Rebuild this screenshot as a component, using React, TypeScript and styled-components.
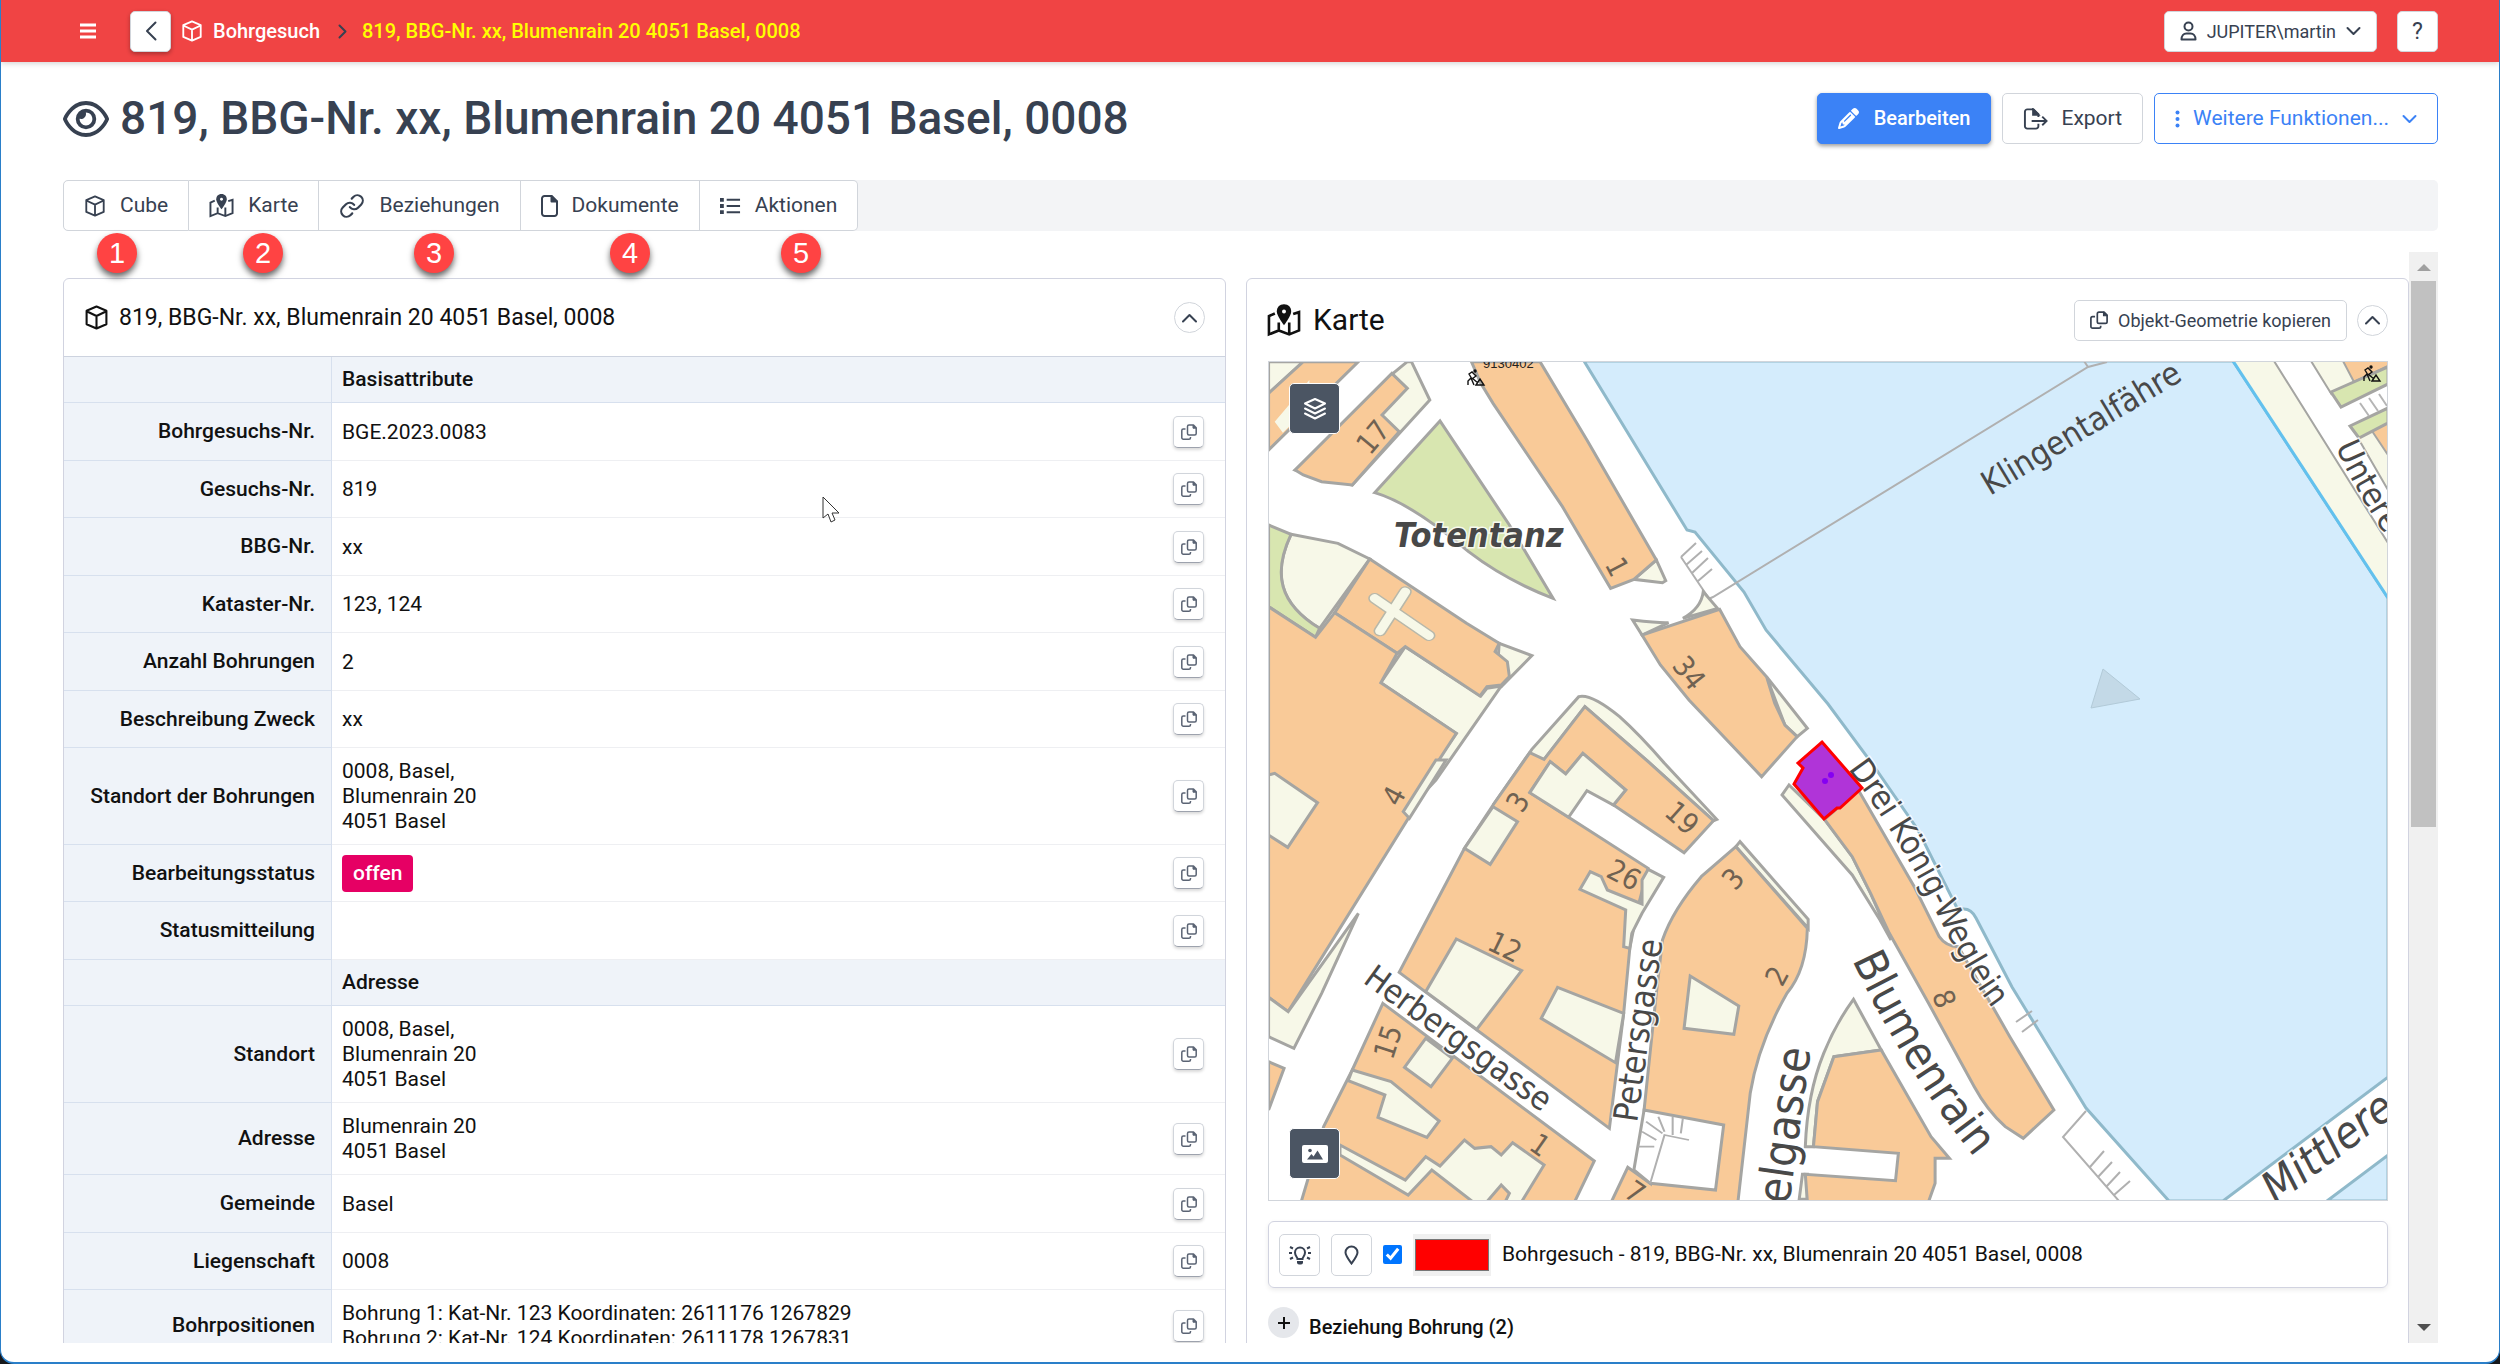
import React from "react";
import styled, { createGlobalStyle, css } from "styled-components";
import { Link } from "lucide-react";
import { FaPencil, FaRegEye } from "react-icons/fa6";

const color = {
  header: "#f04444",
  ink: "#374151",
  line: "#d1d5db",
  panelLine: "#d1d3e0",
  label: "#eff3f9",
  labelLine: "#d7e0ee",
  rowLine: "#eeeff2",
  primary: "#3b82f6",
};

const GlobalStyle = createGlobalStyle`
  * { box-sizing: border-box; }
  html { background: #16181c; }
  body { margin: 0; font-family: Roboto, "Liberation Sans", sans-serif; font-size: 21px; line-height: 25px; color: #111; }
  button, input { font: inherit; color: inherit; }
  h1, h2, p { margin: 0; font-weight: 400; }
`;

const Window = styled.div`
  position: relative;
  display: flex;
  flex-direction: column;
  height: 100vh;
  background: #fff;
  border: solid #2a7fc9;
  border-width: 0 1px 2px;
  border-radius: 0 0 14px 14px;
  overflow: hidden;
`;

const Header = styled.header`
  display: flex;
  flex: none;
  align-items: center;
  height: 62px;
  padding: 0 61px 0 76px;
  background: ${color.header};
  box-shadow: 0 1px 6px rgba(0, 0, 0, 0.2);
`;

const Button = styled.button<{ $small?: boolean; $tone?: "primary" | "outline" }>`
  display: inline-flex;
  flex: none;
  align-items: center;
  justify-content: center;
  gap: ${(p) => (p.$small ? 10 : 13)}px;
  height: ${(p) => (p.$small ? 41 : 51)}px;
  padding: 0 ${(p) => (p.$small ? 15 : 20)}px;
  background: #fff;
  border: 1px solid ${color.line};
  border-radius: 5px;
  color: ${color.ink};
  font-size: ${(p) => (p.$small ? 18 : 21)}px;
  ${(p) => p.$tone === "primary" && css`
    gap: 15px;
    background: ${color.primary};
    border-color: ${color.primary};
    color: #fff;
    font-size: 20px;
    font-weight: 500;
    box-shadow: 0 2px 4px rgba(0, 0, 0, 0.4);
  `}
  ${(p) => p.$tone === "outline" && css`
    border-color: ${color.primary};
    color: ${color.primary};
  `}
`;

const MenuButton = styled.button`
  display: flex;
  width: 22px;
  height: 30px;
  padding: 0;
  align-items: center;
  justify-content: center;
  background: none;
  border: 0;
  color: #fff;
`;

const BackButton = styled(Button)`
  width: 41px;
  margin: 0 10px 0 31px;
  padding: 0;
  box-shadow: 0 2px 4px rgba(0, 0, 0, 0.3);
`;

const SquareButton = styled(Button)`
  width: 41px;
  margin-left: 20px;
  padding: 0;
  font-size: 23px;
`;

const Breadcrumb = styled.nav`
  display: flex;
  flex: 1;
  align-items: center;
  font-size: 20px;
  font-weight: 500;
  color: ${color.ink};
  a { margin: 0 18px 0 10px; color: #fff; text-decoration: none; }
`;

const Crumb = styled.span`
  margin-left: 15px;
  color: #ffff00;
`;

const TitleBar = styled.div`
  display: flex;
  align-items: center;
  gap: 11px;
  margin: 31px 61px 0 62px;
  height: 51px;
`;

const Title = styled.h1`
  display: flex;
  flex: 1;
  align-items: center;
  gap: 11px;
  color: ${color.ink};
  font-size: 46px;
  font-weight: 500;
  line-height: 51px;
`;

const TabBar = styled.nav`
  display: flex;
  flex: none;
  height: 51px;
  margin: 36px 61px 0 62px;
  background: #f3f4f6;
  border-radius: 5px;
`;

const Tab = styled.button`
  display: flex;
  align-items: center;
  gap: 14px;
  height: 51px;
  padding: 0 20px;
  background: #fff;
  border: 1px solid ${color.line};
  border-left-width: 0;
  color: ${color.ink};
  &:first-child { border-left-width: 1px; border-radius: 5px 0 0 5px; }
  &:last-child { border-radius: 0 5px 5px 0; }
`;

const Marker = styled.span<{ $left: number }>`
  position: absolute;
  top: 233px;
  left: ${(p) => p.$left}px;
  width: 40px;
  height: 40px;
  border-radius: 50%;
  background: #ff4343;
  box-shadow: 0 4px 6px rgba(0, 0, 0, 0.6);
  color: #fff;
  font-family: "Liberation Sans", Arial, sans-serif;
  font-size: 29px;
  line-height: 40px;
  text-align: center;
`;

const Body = styled.main`
  display: flex;
  flex: 1;
  min-height: 0;
  margin: 21px 61px 19px 62px;
`;

const Columns = styled.div`
  display: grid;
  flex: 1;
  grid-template-columns: minmax(0, 1fr) minmax(0, 1fr);
  gap: 20px;
  padding-top: 26px;
  overflow: hidden;
`;

const Panel = styled.section`
  min-height: 1200px;
  border: 1px solid ${color.panelLine};
  border-radius: 6px 6px 0 0;
`;

const PanelHead = styled.div<{ $large?: boolean }>`
  display: flex;
  align-items: center;
  gap: 10px;
  height: ${(p) => (p.$large ? 82 : 77)}px;
  padding: 0 20px;
`;

const PanelTitle = styled.h2<{ $large?: boolean }>`
  display: flex;
  flex: 1;
  align-items: center;
  gap: ${(p) => (p.$large ? 12 : 10)}px;
  font-size: ${(p) => (p.$large ? 30 : 23)}px;
  line-height: 36px;
`;

const RoundButton = styled.button`
  display: flex;
  flex: none;
  align-items: center;
  justify-content: center;
  width: 31px;
  height: 31px;
  padding: 0;
  border: 1px solid ${color.line};
  border-radius: 50%;
  background: #fff;
  color: ${color.ink};
`;

const Table = styled.table`
  width: 100%;
  border-collapse: separate;
  border-spacing: 0;
  border-top: 1px solid #cdd3df;
`;

const Label = styled.th`
  width: 268px;
  padding: 0 16px 0 8px;
  background: ${color.label};
  border: solid ${color.labelLine};
  border-width: 0 1px 1px 0;
  font-weight: 500;
  text-align: right;
`;

const GroupTitle = styled.th`
  padding: 0 10px;
  background: ${color.label};
  border-bottom: 1px solid ${color.labelLine};
  font-weight: 500;
  text-align: left;
`;

const Value = styled.td`
  padding: 11px 10px 10px;
  border-bottom: 1px solid ${color.rowLine};
  white-space: pre-line;
`;

const Action = styled.td`
  width: 52px;
  padding: 0;
  border-bottom: 1px solid ${color.rowLine};
`;

const Row = styled.tr`
  height: 58px;
  &:nth-child(odd) { height: 57px; }
`;

const GroupRow = styled.tr`
  height: 46px;
`;

const CopyButton = styled.button`
  display: flex;
  align-items: center;
  justify-content: center;
  width: 31px;
  height: 32px;
  padding: 0;
  border: 1px solid ${color.line};
  border-bottom-color: #9da2ad;
  border-radius: 5px;
  background: #fff;
  box-shadow: 0 2px 3px rgba(0, 0, 0, 0.15);
  color: #5b6474;
`;

const Status = styled.span`
  display: inline-block;
  margin: -7px 0;
  padding: 6px 11px;
  border-radius: 4px;
  background: #e60064;
  color: #fff;
  font-weight: 500;
`;

const MapBox = styled.div`
  position: relative;
  margin: 0 20px 0 21px;
  border: 1px solid ${color.line};
  svg { display: block; }
`;

const MapButton = styled.button<{ $bottom?: boolean }>`
  position: absolute;
  left: 20px;
  ${(p) => (p.$bottom ? "bottom: 21px;" : "top: 21px;")}
  display: flex;
  align-items: center;
  justify-content: center;
  width: 51px;
  height: 51px;
  padding: 0;
  border: 1px solid #fff;
  border-radius: 5px;
  background: #4b5563;
  color: #fff;
`;

const Legend = styled.div`
  display: flex;
  align-items: center;
  gap: 11px;
  height: 67px;
  margin: 20px 20px 0 21px;
  padding: 0 10px;
  border: 1px solid ${color.panelLine};
  border-radius: 6px;
  box-shadow: 0 2px 5px rgba(0, 0, 0, 0.08);
`;

const LegendButton = styled(Button)`
  width: 41px;
  height: 42px;
  padding: 0;
`;

const Check = styled.input`
  width: 19px;
  height: 19px;
  margin: 0;
  accent-color: #0075ff;
`;

const Swatch = styled.input`
  width: 78px;
  height: 42px;
  padding: 5px 2px;
  border: 0;
  background: #f0f0f0;
  &::-webkit-color-swatch-wrapper { padding: 0; }
  &::-webkit-color-swatch { border: 1px solid #767676; border-radius: 0; }
`;

const Relation = styled.div`
  display: flex;
  align-items: flex-start;
  gap: 10px;
  margin: 19px 21px 0;
`;

const RelationTitle = styled.p`
  padding-top: 8px;
  font-size: 20px;
  font-weight: 500;
`;

const Expand = styled(RoundButton)`
  border: 0;
  background: #e5e7eb;
  color: #111;
`;

const Scrollbar = styled.div`
  display: flex;
  flex: none;
  flex-direction: column;
  align-items: center;
  justify-content: space-between;
  width: 29px;
  background: #f0f0f0;
`;

const ScrollTrack = styled.div`
  flex: 1;
  width: 25px;
`;

const ScrollThumb = styled.div`
  height: 53%;
  background: #c1c1c1;
`;

const Arrow = styled.div<{ $down?: boolean }>`
  margin: ${(p) => (p.$down ? "12px 0" : "12px 0 10px")};
  border: solid transparent;
  border-width: ${(p) => (p.$down ? "7px 7px 0" : "0 7px 7px")};
  border-top-color: ${(p) => (p.$down ? "#505050" : "transparent")};
  border-bottom-color: ${(p) => (p.$down ? "transparent" : "#a0a0a0")};
`;

const Cursor = styled.svg`
  position: absolute;
  top: 496px;
  left: 820px;
`;

const Bars = () => (
  <svg width="18" height="16" viewBox="0 0 18 16" stroke="currentColor" strokeWidth="3">
    <path d="M1 2h16M1 8h16M1 14h16" />
  </svg>
);

const chevrons = {
  down: [15, 10, "M1.500 2 7.500 8 13.500 2"],
  up: [15, 10, "M1 8.500 7.500 2 14 8.500"],
  left: [12, 20, "M10.500 1.500 2 10 10.500 18.500"],
  right: [9, 15, "M1.500 1.500 7.500 7.500 1.500 13.500"],
} as const;

const Chevron = ({ to }: { to: keyof typeof chevrons }) => {
  const [w, h, d] = chevrons[to];
  return (
    <svg width={w} height={h} viewBox={`0 0 ${w} ${h}`} fill="none" stroke="currentColor" strokeWidth="2" strokeLinecap="round" strokeLinejoin="round">
      <path d={d} />
    </svg>
  );
};

const CubeIcon = ({ size = 22, tint = "currentColor" }: { size?: number; tint?: string }) => (
  <svg width={size} height={size} viewBox="0 0 24 24" fill="none" stroke={tint} strokeWidth="2" strokeLinejoin="round">
    <path d="M12 1.500 21.500 5.500V18.500L12 22.500 2.500 18.500V5.500ZM2.500 6 12 10.500 21.500 6M12 10.500V22" />
  </svg>
);

const FileIcon = () => (
  <svg width="17" height="22" viewBox="0 0 17 22" fill="none" stroke="currentColor" strokeWidth="2" strokeLinejoin="round">
    <path d="M3.500 1H10.500L16 6.500V18.500A2.500 2.500 0 0 1 13.500 21H3.500A2.500 2.500 0 0 1 1 18.500V3.500A2.500 2.500 0 0 1 3.500 1Z" />
    <path d="M10.500 1V6.500H16Z" fill="currentColor" />
  </svg>
);

const CopyIcon = ({ size = 16 }: { size?: number }) => (
  <svg width={size} height={size} viewBox="0 0 16 16" fill="none" stroke="currentColor" strokeWidth="1.500" strokeLinejoin="round">
    <path d="M8 1H12.500L15.200 3.700V9.500A1.500 1.500 0 0 1 13.700 11H8A1.500 1.500 0 0 1 6.500 9.500V2.500A1.500 1.500 0 0 1 8 1Z" />
    <path d="M12 1V4.200H15.200Z" fill="currentColor" strokeWidth="1" />
    <path d="M4.500 5H2.300A1.500 1.500 0 0 0 .8 6.500V13.700A1.500 1.500 0 0 0 2.300 15.200H8A1.500 1.500 0 0 0 9.500 13.700V13" />
  </svg>
);

const DotsIcon = () => (
  <svg width="5" height="18" viewBox="0 0 5 18" fill="currentColor">
    <circle cx="2.500" cy="2.500" r="2" /><circle cx="2.500" cy="9" r="2" /><circle cx="2.500" cy="15.500" r="2" />
  </svg>
);

const ImageIcon = () => (
  <svg width="26" height="18" viewBox="0 0 26 18">
    <rect width="26" height="18" rx="2" fill="#fff" />
    <circle cx="8" cy="5.500" r="1.800" fill="#4b5563" />
    <path d="M5 14.500 9.500 9 11.500 11.500 15.500 5.500 21 14.500Z" fill="#4b5563" />
  </svg>
);

const MapPinIcon = ({ size }: { size: number }) => (
  <svg width={size} height={size} viewBox="0 0 26 26" fill="none" stroke="currentColor" strokeWidth="2">
    <path d="M6 8 1.500 10v14L9 21l8 3 7.500-3V7L20 8.500M9 15v6M17 15v9" />
    <path d="M13 1c-3.500 0-5.500 2.400-5.500 5.500C7.500 10 13 17 13 17s5.500-7 5.500-10.500C18.500 3.400 16.500 1 13 1Z" fill="currentColor" stroke="none" />
    <circle cx="13" cy="6.500" r="1.500" fill="#fff" stroke="none" />
  </svg>
);

const ListIcon = () => (
  <svg width="21" height="18" viewBox="0 0 22 18" stroke="currentColor" strokeWidth="2">
    <path d="M7 2.500h14M7 9h14M7 15.500h14" />
    <path d="M0 2.500h4M0 9h4M0 15.500h4" strokeWidth="4" />
  </svg>
);

const ExportIcon = () => (
  <svg width="25" height="22" viewBox="0 0 26 22" fill="none" stroke="currentColor" strokeWidth="2">
    <path d="M16 16v2.500a2.500 2.500 0 0 1-2.500 2.500h-9A2.500 2.500 0 0 1 2 18.500v-15A2.500 2.500 0 0 1 4.500 1H11l5 5v3M9 13h15M20 8.500l4.500 4.500-4.500 4.500" />
    <path d="M10.500 1v5.500H16Z" fill="currentColor" />
  </svg>
);

const UserIcon = () => (
  <svg width="17" height="20" viewBox="0 0 17 20" fill="none" stroke="currentColor" strokeWidth="2">
    <circle cx="8.500" cy="5.500" r="4" />
    <path d="M1.500 18.500c0-3.500 2-6 5-6h4c3 0 5 2.500 5 6Z" strokeLinejoin="round" />
  </svg>
);

const LayersIcon = () => (
  <svg width="24" height="24" viewBox="0 0 24 24" fill="none" stroke="currentColor" strokeWidth="2" strokeLinejoin="round" strokeLinecap="round">
    <path d="m12 2 10 4.500-10 5-10-5ZM2 11.500l10 5 10-5M2 16.500l10 5 10-5" />
  </svg>
);

const BulbIcon = () => (
  <svg width="24" height="20" viewBox="0 0 24 20" fill="none" stroke="currentColor" strokeWidth="2">
    <path d="M9.500 14c0-2-2.500-3-2.500-6.500a5 5 0 0 1 10 0c0 3.500-2.500 4.500-2.500 6.500ZM1 8h3M20 8h3M2 2l3 1.500M22 2l-3 1.500M2 14l3-1.500M22 14l-3-1.500" />
    <path d="M9 16h6v1.500a2 2 0 0 1-2 2h-2a2 2 0 0 1-2-2Z" fill="currentColor" stroke="none" />
  </svg>
);

const PinIcon = () => (
  <svg width="15" height="20" viewBox="0 0 15 20" fill="none" stroke="currentColor" strokeWidth="2">
    <path d="M7.500 18.500C5 15 1.500 10.500 1.500 7.500a6 6 0 0 1 12 0c0 3-3.500 7.500-6 11Z" />
  </svg>
);

const upper = {
  cream: [
    "M70 65H155L70 160Z",
    "M135 390 375 100 410 65H420L465 180 275 435Z",
    "M965 718 1020 660 1043 722 1035 728Z",
    "M125 583 240 610 318 657 195 865C95 790 80 700 125 583Z",
    "M405 920 588 1068 640 1040 715 947 635 910 630 1000Z",
    "M405 920 590 1068 605 1045 640 1038 480 1320 400 1425 450 1320 530 1180 345 1028Z",
    "M962 840Q1030 850 1050 848L985 885Z",
    "M1135 755 1170 805 1085 835Q1130 805 1135 755Z",
    "M1290 1010 1390 1165 1365 1190 1335 1155Z",
  ],
  green: [
    "M330 458 490 243 660 555 767 775Q650 720 560 635 420 490 330 458Z",
    "M70 555 125 583C80 700 95 790 195 865L185 892 70 800Z",
  ],
  orange: [
    "M155 65H290L70 330V160Z",
    "M135 390 372 100 410 145 348 225 390 275 275 435 200 425 155 405Z",
    "M567 65H735L850 300 1020 660 965 718 908 745 790 500 620 190 590 130Z",
    "M318 657 555 850 635 910 625 935 655 965 660 1010 640 1035 605 1040 588 1068 405 920 385 940 232 818Z",
    "M70 800 185 892 232 818 385 940 345 1028 530 1180 405 1415 415 1430 118 2015 70 1972Z",
    "M1175 808 1225 920 1290 1010 1310 1090 1335 1155 1365 1190 1278 1310 1100 1080 1030 975 985 885Z",
  ],
};

const lower = {
  cream: [
    "M505 0 415 175 400 155 480 0Z",
    "M290 460 200 700 132 865 70 830V712L118 755Z",
    "M620 135 715-32 830-190Q860-200 930-130 980-75 1040 10L1168 178 1160 182 1000 5 845-160 745-2Z",
    "M1215 260 1225 245 1392 478V505Z",
    "M1503 718 1571 870 1455 890 1415 1025 1405 1160H1385Q1390 1000 1430 880 1460 790 1503 718Z",
    "M1345 75 1328 105 1500 345 1568 480 1595 540 1545 400 1500 290 1432 178Z",
    "M1370 1318 1378 1243H1390V1318Z",
  ],
  orange: [
    "M845-160 745-2 710-22 620 135 550 265 390 637 905 1105 940 760 955 565 975 440 1000 325 805 172 710 98 760 5 798 42 840-20 945 90 915 135 1088 278 1160 182 1000 5Z",
    "M350 730 868 1203 820 1325H150L205 1100 275 930Z",
    "M70 905 108 925 70 1050Z",
    "M1215 260 1390 505Q1388 630 1340 700 1270 850 1250 1000L1220 1325H910L950 1222 1005 1270 990 1050 1020 700 1035 540Q1060 450 1130 350Z",
    "M1455 890 1571 870 1693 1130 1738 1195H1703V1270L1687 1325H1390L1385 1243 1606 1262 1613 1180 1405 1160 1415 1025Z",
    "M1432 178 1500 290 1545 400 1591 520 1687 730 1799 980Q1830 1050 1875 1100L1919 1135 1994 1050 1886 830 1760 560Q1730 560 1713 530L1652 380 1515 90Z",
  ],
  court: [
    "M70 45 85 40 190 128 117 262 70 225Z",
    "M760 5 798 42 840-20 945 90 915 135 850 92 805 172 710 98Z",
    "M620 140 680 185 613 313 550 265Z",
    "M858 335 885 350 900 390 985 432V360L1000 328 1038 352 985 460 960 520 955 565 940 560 945 450 833 388Z",
    "M530 537 690 632 580 808 455 695Z",
    "M778 682 940 760 920 908 738 775Z",
    "M455 835 520 895 468 980 403 922Z",
    "M275 930 370 965 488 1083 458 1132 338 1072 355 1005 265 962Z",
    "M245 1155 405 1260 455 1190 490 1218 550 1140 575 1165 615 1160 640 1185 668 1148 745 1215 690 1325H570L470 1230 412 1305 245 1185Z",
    "M1103 648 1222 738 1210 823 1088 805Z",
  ],
};

const Shapes = ({ paths, fill }: { paths: string[]; fill: string }) => (
  <g fill={fill} stroke="#a5a5a2" strokeWidth="3">
    {paths.map((d) => <path key={d} d={d} vectorEffect="non-scaling-stroke" />)}
  </g>
);

const houses: [string, number, number, number][] = [
  ["17", 105, 76, -50], ["1", 349, 206, 62], ["34", 421, 312, 52], ["4", 126, 435, -62],
  ["3", 250, 441, -58], ["19", 414, 457, 42], ["26", 356, 514, 28], ["12", 237, 586, 26],
  ["15", 120, 681, -72], ["3", 465, 518, -48], ["2", 509, 615, -62], ["1", 272, 784, 35],
  ["7", 367, 831, 35], ["8", 676, 638, 70],
];

const streets: [string, number, number, number, number][] = [
  ["Herbergsgasse", 94, 621, 36, 33],
  ["Petersgasse", 369, 762, -82, 34],
  ["elgasse", 521, 844, -82, 46],
  ["Klingentalfähre", 722, 135, -31, 33],
];

const Worker = ({ x, y }: { x: number; y: number }) => (
  <g transform={`translate(${x} ${y})`} fill="none" stroke="#111" strokeWidth="1.400">
    <circle cx="8" cy="2" r="1" fill="#111" />
    <path d="M1 16V12L4 9l3 7M2 5l3-2 4 4-4 3ZM5 9l6 5M9 16l4-6 4 6Z" />
  </g>
);

const CityMap = () => (
  <svg width="100%" viewBox="1 1 1118 838" role="img" aria-label="Karte">
    <rect width="1120" height="840" fill="#fff" />
    <path d="M316 0 419 169 427 171 476 231 498 269 560 343 603 401 650 469 690 549Q702 545 708 557L744 626 818 747 901 840H955L1120 716V237L965 0Z" fill="#d4ecfc" stroke="#8fb9ca" strokeWidth="3" />
    <path d="M1059 840 1120 794V840Z" fill="#d4ecfc" stroke="#8fb9ca" strokeWidth="3" />
    <path d="M965 0H1006L1120 182V237Z" fill="#f7f8e8" />
    <path d="M965 0 1120 237" stroke="#62c1ee" strokeWidth="3" />
    <path d="M1043 0 1064 34 1120 5V0ZM1090 77 1120 129V60Z" fill="#f7f8e8" />
    <path d="M1006 0 1120 182M1043 0 1064 34M1090 77 1120 129" stroke="#a5a5a2" strokeWidth="2" />
    <path d="M1075 0 1086 21 1120 5V0ZM1104 70 1120 62V94Z" fill="#f9ca98" stroke="#a5a5a2" strokeWidth="2" />
    <path d="M1063 31 1120 6V23L1073 46ZM1082 65 1120 47V62L1091 77Z" fill="#d8e6b0" stroke="#a5a5a2" strokeWidth="3" />
    <path d="M1092 42 1101 55M1101 37 1110 50M1111 33 1119 45" stroke="#b5b5b5" strokeWidth="2" />
    <path d="M436 240 445 236 820 6 839 1M820 6 816 0M413 196 448 248M413 196 428 182M418 204 434 190M424 212 440 197M430 220 444 208M818 750 795 776 851 840M748 661 764 650M754 671 770 659M822 806 836 790M830 816 844 801M838 826 852 811M846 834 862 820" fill="none" stroke="#b0b0b0" strokeWidth="2" />
    <g transform="translate(-28 -21) scale(.408163 .333333)">
      <Shapes paths={upper.cream} fill="#f7f8e8" />
      <Shapes paths={upper.green} fill="#d8e6b0" />
      <Shapes paths={upper.orange} fill="#f9ca98" />
      <path d="M120 195 85 245 105 278 170 200V120Z" fill="#f7f8e8" />
      <path d="m330 775 133 112M405 755 343 873" stroke="#b8b8aa" strokeWidth="32" strokeLinecap="round" />
      <path d="m330 775 133 112M405 755 343 873" stroke="#f7f8e8" strokeWidth="24" strokeLinecap="round" />
      <g transform="translate(0 1260)">
        <Shapes paths={lower.cream} fill="#f7f8e8" />
        <Shapes paths={lower.orange} fill="#f9ca98" />
        <Shapes paths={lower.court} fill="#f7f8e8" />
        <Shapes paths={["M605 1325 640 1275 660 1300 650 1325Z"]} fill="#f9ca98" />
        <Shapes paths={["M990 1050 1185 1095 1165 1290 1005 1270 965 1230Z"]} fill="#fff" />
        <path d="M1005 1270 1040 1125 1100 1140M985 1115 1020 1140M995 1085 1035 1120M1025 1070 1040 1115M1060 1070V1125M1085 1075 1080 1120M975 1160H1015" fill="none" stroke="#b0b0b0" strokeWidth="5" />
      </g>
    </g>
    <path d="m835 308 37 30-49 9Z" fill="#c3d9e7" stroke="#b2cad8" />
    <g fontFamily="'DejaVu Sans Condensed', 'DejaVu Sans', sans-serif">
      <g fontSize="29" fill="#706252" textAnchor="middle">
        {houses.map(([n, x, y, a]) => <text key={`${n}-${x}`} transform={`translate(${x} ${y}) rotate(${a})`} dy="10">{n}</text>)}
      </g>
      <g fill="#484848" strokeWidth="3" strokeOpacity=".8" paintOrder="stroke">
        {streets.map(([name, x, y, a, size]) => (
          <text key={name} transform={`translate(${x} ${y}) rotate(${a})`} fontSize={size} stroke={name === "Klingentalfähre" ? "none" : "#fff"}>{name}</text>
        ))}
        <text x="126" y="186" fontSize="34" fontWeight="700" fontStyle="italic" stroke="#fff">Totentanz</text>
        <text transform="translate(1008 844) rotate(-37)" fontSize="44" fontStyle="italic" stroke="#fff">Mittlere</text>
        <path id="quay" d="M580 408Q630 475 667 549T727 650L760 706" fill="none" stroke="none" />
        <path id="rain" d="M584 599Q608 650 638 699T706 796L740 840" fill="none" stroke="none" />
        <path id="bank" d="M1068 86Q1086 130 1135 200" fill="none" stroke="none" />
        <text fontSize="33" stroke="#fff"><textPath href="#quay">Drei König-Weglein</textPath></text>
        <text fontSize="45" stroke="#fff"><textPath href="#rain">Blumenrain</textPath></text>
        <text fontSize="33" stroke="#fff"><textPath href="#bank">Untere</textPath></text>
      </g>
    </g>
    <path d="M554 381 594 427 572 447H569L556 458 526 423 535 407 530 402Z" fill="#b034d8" stroke="#ff0000" strokeWidth="3" />
    <g fill="#8500f2"><circle cx="563" cy="414" r="3" /><circle cx="557" cy="420" r="3" /></g>
    <text x="215" y="7" fontSize="13" fill="#222" fontFamily="'Liberation Sans', sans-serif">9130402</text>
    <Worker x={199} y={8} />
    <Worker x={1095} y={4} />
  </svg>
);

const objectName = "819, BBG-Nr. xx, Blumenrain 20 4051 Basel, 0008";

const basics: [string, string][] = [
  ["Bohrgesuchs-Nr.", "BGE.2023.0083"],
  ["Gesuchs-Nr.", "819"],
  ["BBG-Nr.", "xx"],
  ["Kataster-Nr.", "123, 124"],
  ["Anzahl Bohrungen", "2"],
  ["Beschreibung Zweck", "xx"],
  ["Standort der Bohrungen", "0008, Basel,\nBlumenrain 20\n4051 Basel"],
  ["Bearbeitungsstatus", "offen"],
  ["Statusmitteilung", ""],
];

const address: [string, string][] = [
  ["Standort", "0008, Basel,\nBlumenrain 20\n4051 Basel"],
  ["Adresse", "Blumenrain 20\n4051 Basel"],
  ["Gemeinde", "Basel"],
  ["Liegenschaft", "0008"],
  ["Bohrpositionen", "Bohrung 1: Kat-Nr. 123 Koordinaten: 2611176 1267829\nBohrung 2: Kat-Nr. 124 Koordinaten: 2611178 1267831"],
];

const DataRow = ({ label, value }: { label: string; value: string }) => (
  <Row>
    <Label scope="row">{label}</Label>
    <Value>{label === "Bearbeitungsstatus" ? <Status>{value}</Status> : value}</Value>
    <Action><CopyButton aria-label={`${label} kopieren`}><CopyIcon /></CopyButton></Action>
  </Row>
);

const Group = ({ title, rows }: { title: string; rows: [string, string][] }) => (
  <>
    <GroupRow>
      <Label as="td" />
      <GroupTitle colSpan={2}>{title}</GroupTitle>
    </GroupRow>
    {rows.map(([label, value]) => <DataRow key={label} label={label} value={value} />)}
  </>
);

export default function App() {
  return (
    <Window>
      <GlobalStyle />
      <Header>
        <MenuButton aria-label="Menü"><Bars /></MenuButton>
        <BackButton $small aria-label="Zurück"><Chevron to="left" /></BackButton>
        <Breadcrumb>
          <CubeIcon tint="#fff" />
          <a href="#bohrgesuch">Bohrgesuch</a>
          <Chevron to="right" />
          <Crumb>{objectName}</Crumb>
        </Breadcrumb>
        <Button $small><UserIcon />JUPITER\martin<Chevron to="down" /></Button>
        <SquareButton $small aria-label="Hilfe">?</SquareButton>
      </Header>

      <TitleBar>
        <Title><FaRegEye size={46} />{objectName}</Title>
        <Button $tone="primary"><FaPencil size={21} />Bearbeiten</Button>
        <Button><ExportIcon />Export</Button>
        <Button $tone="outline"><DotsIcon />Weitere Funktionen...<Chevron to="down" /></Button>
      </TitleBar>

      <TabBar>
        <Tab><CubeIcon />Cube</Tab>
        <Tab><MapPinIcon size={25} />Karte</Tab>
        <Tab><Link size={26} />Beziehungen</Tab>
        <Tab><FileIcon />Dokumente</Tab>
        <Tab><ListIcon />Aktionen</Tab>
      </TabBar>

      <Body>
        <Columns>
          <Panel>
            <PanelHead>
              <PanelTitle><CubeIcon size={25} />{objectName}</PanelTitle>
              <RoundButton aria-label="Einklappen"><Chevron to="up" /></RoundButton>
            </PanelHead>
            <Table>
              <tbody>
                <Group title="Basisattribute" rows={basics} />
                <Group title="Adresse" rows={address} />
              </tbody>
            </Table>
          </Panel>
          <Panel>
            <PanelHead $large>
              <PanelTitle $large><MapPinIcon size={34} />Karte</PanelTitle>
              <Button $small><CopyIcon size={18} />Objekt-Geometrie kopieren</Button>
              <RoundButton aria-label="Einklappen"><Chevron to="up" /></RoundButton>
            </PanelHead>
            <MapBox>
              <CityMap />
              <MapButton aria-label="Ebenen"><LayersIcon /></MapButton>
              <MapButton $bottom aria-label="Hintergrund"><ImageIcon /></MapButton>
            </MapBox>
            <Legend>
              <LegendButton aria-label="Hervorheben"><BulbIcon /></LegendButton>
              <LegendButton aria-label="Zentrieren"><PinIcon /></LegendButton>
              <Check id="layer" type="checkbox" defaultChecked />
              <Swatch type="color" defaultValue="#ff0000" aria-label="Farbe" />
              <label htmlFor="layer">Bohrgesuch - {objectName}</label>
            </Legend>
            <Relation>
              <Expand aria-label="Aufklappen">
                <svg width="14" height="14" viewBox="0 0 14 14" stroke="currentColor" strokeWidth="2"><path d="M7 1v12M1 7h12" /></svg>
              </Expand>
              <RelationTitle>Beziehung Bohrung (2)</RelationTitle>
            </Relation>
          </Panel>
        </Columns>
        <Scrollbar>
          <Arrow />
          <ScrollTrack><ScrollThumb /></ScrollTrack>
          <Arrow $down />
        </Scrollbar>
      </Body>

      {[97, 243, 414, 610, 781].map((left, i) => <Marker key={left} $left={left - 1}>{i + 1}</Marker>)}
      <Cursor width="20" height="28" viewBox="0 0 20 28" fill="#fff" stroke="#333" strokeWidth="1">
        <path d="M2 1v21l5-4 3 8 4-2-3-7h7Z" />
      </Cursor>
    </Window>
  );
}
